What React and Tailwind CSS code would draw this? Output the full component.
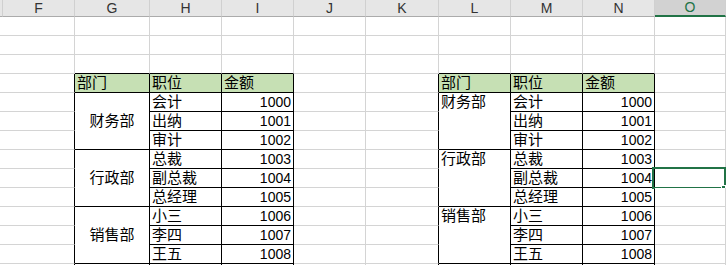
import React from "react";

const groups = [
  { dept: "财务部", items: [["会计", 1000], ["出纳", 1001], ["审计", 1002]] },
  { dept: "行政部", items: [["总裁", 1003], ["副总裁", 1004], ["总经理", 1005]] },
  { dept: "销售部", items: [["小三", 1006], ["李四", 1007], ["王五", 1008]] },
];

const font = { fontFamily: '"Liberation Sans", "Noto Sans CJK SC", sans-serif' };

function Head({ label, w, active }) {
  return (
    <div
      className={
        "box-border h-[17px] shrink-0 border-r border-r-[#d0d0d0] flex items-center justify-center text-[14px] " +
        (active
          ? "bg-[#d2d2d2] border-b-2 border-b-[#217346] text-[#217346]"
          : "bg-[#e6e6e6] border-b border-b-[#ababab] text-[#333]")
      }
    >
      {label}
    </div>
  );
}

function Cell({ tall, right, bottom, green, align, children, center }) {
  return (
    <div
      className={
        "box-border shrink-0 border-r border-b overflow-hidden whitespace-nowrap flex px-[2px] text-[15px] text-black " +
        (tall ? "h-[57px] " : "h-[19px] ") +
        (right ? "border-r-black " : "border-r-[#d4d4d4] ") +
        (bottom ? "border-b-black " : "border-b-[#d4d4d4] ") +
        (green ? "bg-[#c6e0b4] " : "bg-white ") +
        (center ? "items-center justify-center " : "items-start ") +
        (align === "right" ? "justify-end " : "")
      }
    >
      <span className="leading-[18px]">{children}</span>
    </div>
  );
}

function Blank({ count = 1, right, bottom }) {
  return Array.from({ length: count }).map((_, i) => (
    <Cell key={i} right={right} bottom={bottom} />
  ));
}

function EmptyCol({ w, label, edge, active, selectRow }) {
  return (
    <div className={"flex flex-col " + w}>
      <Head label={label} active={active} />
      {Array.from({ length: 14 }).map((_, i) => (
        <div key={i} className="relative">
          <Cell right={edge && i >= 3} />
          {selectRow === i && (
            <div className="absolute -top-[2px] -left-[3px] right-0 h-[22px] border-2 border-[#217346] pointer-events-none">
              <div className="absolute -right-[2px] -bottom-[3px] w-[5px] h-[5px] bg-[#217346] border border-white" />
            </div>
          )}
        </div>
      ))}
    </div>
  );
}

function DeptCol({ w, label, merged }) {
  return (
    <div className={"flex flex-col " + w}>
      <Head label={label} />
      <Blank count={2} />
      <Cell bottom />
      <Cell green right bottom>部门</Cell>
      {groups.map((g) => (
        <Cell key={g.dept} tall right bottom center={merged}>
          {g.dept}
        </Cell>
      ))}
      <Cell right />
    </div>
  );
}

function ItemCol({ w, label, title, field }) {
  return (
    <div className={"flex flex-col " + w}>
      <Head label={label} />
      <Blank count={2} />
      <Cell bottom />
      <Cell green right bottom>{title}</Cell>
      {groups.flatMap((g) =>
        g.items.map(([pos, amt]) => (
          <Cell key={pos} right bottom align={field === 1 ? "right" : "left"}>
            {field === 1 ? <span className="text-[14px]">{amt}</span> : pos}
          </Cell>
        ))
      )}
      <Cell right />
    </div>
  );
}

export default function App() {
  return (
    <div className="w-[726px] h-[265px] overflow-hidden bg-white flex" style={font}>
      <div className="flex flex-col w-[3px]">
        <Head label="" />
        <Blank count={14} />
      </div>
      <EmptyCol w="w-[72px]" label="F" edge />
      <DeptCol w="w-[75px]" label="G" merged />
      <ItemCol w="w-[72px]" label="H" title="职位" field={0} />
      <ItemCol w="w-[72px]" label="I" title="金额" field={1} />
      <EmptyCol w="w-[72px]" label="J" />
      <EmptyCol w="w-[73px]" label="K" edge />
      <DeptCol w="w-[72px]" label="L" />
      <ItemCol w="w-[72px]" label="M" title="职位" field={0} />
      <ItemCol w="w-[72px]" label="N" title="金额" field={1} />
      <EmptyCol w="flex-1" label="O" active selectRow={8} />
    </div>
  );
}
